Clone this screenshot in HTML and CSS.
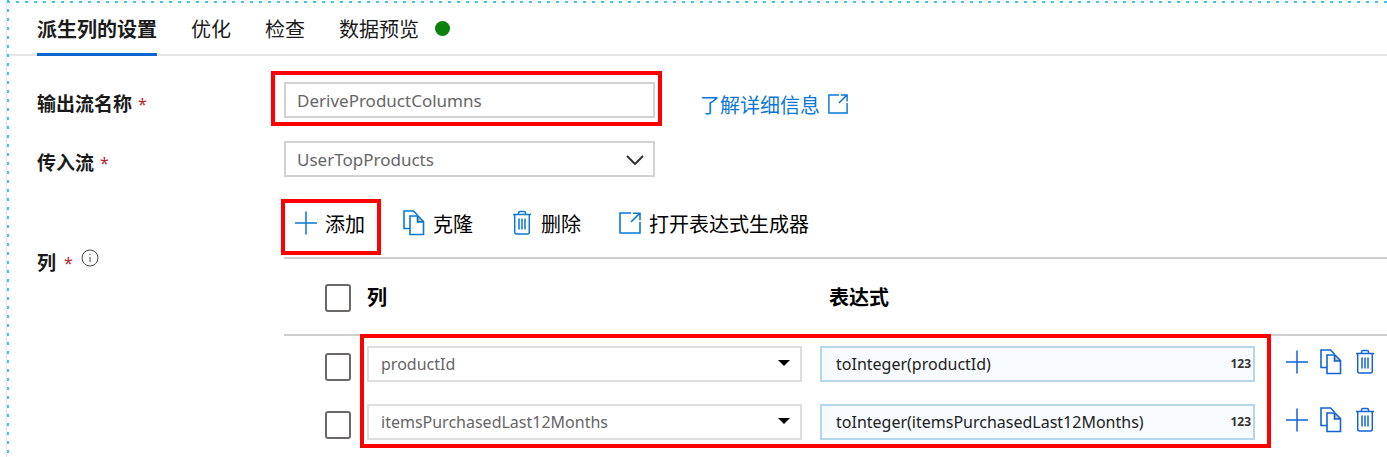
FILE: index.html
```html
<!DOCTYPE html>
<html lang="zh-CN">
<head>
<meta charset="utf-8">
<title>派生列的设置</title>
<link rel="stylesheet" href="styles.css">
</head>
<body>
<svg class="sprite" aria-hidden="true">
  <symbol id="plus" viewBox="0 0 22 26"><path d="M11 1.5v23M0 13h22" stroke-width="1.5"/></symbol>
  <symbol id="copy" viewBox="0 0 22 26"><path d="M6.500 18.500H1V1h9.500l4 4M7 6h8l5.500 5.500V24.500H7zM14.500 6v6h6" stroke-width="1.600"/><path d="M14.500 6.500v5.500h5.500z" fill="currentColor" fill-opacity=".25" stroke="none"/></symbol>
  <symbol id="trash" viewBox="0 0 22 26"><path d="M2 4.500h18M7.500 4.500V3q0-1.500 1.500-1.500h4q1.500 0 1.500 1.500v1.500M3.700 4.500v17.500q0 2 2 2h10.600q2 0 2-2V4.500M8 8.500v11M11 8.500v11M14 8.500v11" stroke-width="1.500"/></symbol>
  <symbol id="open" viewBox="0 0 22 22"><path d="M12 1H1v20h20V10M12 10l8.500-8.500M14 1.200h7v7" stroke-width="1.600"/></symbol>
</svg>
<main class="panel">
  <nav class="tabs" role="tablist">
    <button class="tab tab-active" role="tab" aria-selected="true">派生列的设置</button>
    <button class="tab" role="tab">优化</button>
    <button class="tab" role="tab">检查</button>
    <button class="tab" role="tab">数据预览<span class="status"></span></button>
  </nav>
  <form class="form">
    <label class="label" for="stream">输出流名称 <span class="required">*</span></label>
    <div class="line">
      <div class="field field-marked"><input class="control" id="stream" type="text" value="DeriveProductColumns"></div>
      <a class="link" href="#">了解详细信息<svg class="icon-link"><use href="#open"/></svg></a>
    </div>
    <label class="label" for="incoming">传入流 <span class="required">*</span></label>
    <div class="line">
      <div class="field">
        <select class="control" id="incoming"><option>UserTopProducts</option></select>
        <svg class="chevron" viewBox="0 0 18 10"><path d="M1 1l8 8 8-8"/></svg>
      </div>
    </div>
    <div class="label label-columns"><span>列</span><span class="required">*</span>
      <svg class="info" viewBox="0 0 18 18"><circle cx="9" cy="9" r="8"/><path d="M9 8v5M9 5v1"/></svg>
    </div>
    <section class="columns">
      <div class="toolbar">
        <button class="tool tool-marked" type="button"><svg class="icon"><use href="#plus"/></svg>添加</button>
        <button class="tool" type="button"><svg class="icon"><use href="#copy"/></svg>克隆</button>
        <button class="tool" type="button"><svg class="icon"><use href="#trash"/></svg>删除</button>
        <button class="tool" type="button"><svg class="icon"><use href="#open"/></svg>打开表达式生成器</button>
      </div>
      <div class="table-wrap">
        <table class="table">
          <thead>
            <tr><th class="col-check"><input class="check" type="checkbox" aria-label="全选"></th><th>列</th><th class="head-expression">表达式</th><th class="col-actions"></th></tr>
          </thead>
          <tbody>
            <tr>
              <td class="col-check"><input class="check" type="checkbox" aria-label="productId"></td>
              <td><div class="cell"><select class="control control-column" aria-label="列"><option>productId</option></select><svg class="caret" viewBox="0 0 12 6"><path d="M0 0h12L6 6z"/></svg></div></td>
              <td><div class="cell"><input class="control control-expression" type="text" aria-label="表达式" value="toInteger(productId)"><span class="type">123</span></div></td>
              <td><div class="actions">
                <button class="action" type="button" aria-label="添加"><svg class="icon"><use href="#plus"/></svg></button>
                <button class="action" type="button" aria-label="克隆"><svg class="icon"><use href="#copy"/></svg></button>
                <button class="action" type="button" aria-label="删除"><svg class="icon"><use href="#trash"/></svg></button>
              </div></td>
            </tr>
            <tr>
              <td class="col-check"><input class="check" type="checkbox" aria-label="itemsPurchasedLast12Months"></td>
              <td><div class="cell"><select class="control control-column" aria-label="列"><option>itemsPurchasedLast12Months</option></select><svg class="caret" viewBox="0 0 12 6"><path d="M0 0h12L6 6z"/></svg></div></td>
              <td><div class="cell"><input class="control control-expression" type="text" aria-label="表达式" value="toInteger(itemsPurchasedLast12Months)"><span class="type">123</span></div></td>
              <td><div class="actions">
                <button class="action" type="button" aria-label="添加"><svg class="icon"><use href="#plus"/></svg></button>
                <button class="action" type="button" aria-label="克隆"><svg class="icon"><use href="#copy"/></svg></button>
                <button class="action" type="button" aria-label="删除"><svg class="icon"><use href="#trash"/></svg></button>
              </div></td>
            </tr>
          </tbody>
        </table>
        <div class="table-mark"></div>
      </div>
    </section>
  </form>
</main>
</body>
</html>
```
FILE: styles.css
```css
* { box-sizing: border-box; }
body {
  margin: 0;
  background: #fff;
  color: #1b1b1b;
  font-family: "Noto Sans", "Noto Sans CJK SC", sans-serif;
  font-size: 20px;
}
button, input, select { font: inherit; color: inherit; margin: 0; }
button { background: none; border: 0; padding: 0; }
.sprite { display: none; }

.panel {
  margin-left: 6px;
  padding: 3px 0 4px 2px;
  border-left: 1px solid #e4e4e4;
  background:
    repeating-linear-gradient(90deg, #3fc4ea 0 3px, transparent 3px 9px) 0 1px / 100% 2px no-repeat,
    repeating-linear-gradient(180deg, #3fc4ea 0 3px, transparent 3px 9px) 0 0 / 2px 100% no-repeat;
}

.tabs {
  display: flex;
  gap: 34px;
  height: 53px;
  padding-left: 28px;
  border-bottom: 2px solid #e5e5e5;
}
.tab {
  display: flex;
  align-items: center;
  height: 53px;
  border-bottom: 3px solid transparent;
}
.tab-active { font-weight: 700; border-bottom-color: #0a66d0; }
.status {
  width: 15px;
  height: 15px;
  margin-left: 16px;
  border-radius: 50%;
  background: #0b800b;
}

.form {
  display: grid;
  grid-template-columns: 247px minmax(0, 1fr);
  row-gap: 23px;
  padding: 26px 0 0 28px;
}
.label {
  display: flex;
  gap: 6px;
  height: 36px;
  padding-top: 8px;
  font-size: 19px;
  font-weight: 700;
  line-height: 28px;
}
.label-columns { height: auto; gap: 8px; padding-top: 49px; }
.required { color: #b8242f; font-size: 16px; font-weight: 400; }
.info { width: 18px; height: 18px; fill: none; stroke: #444; }

.line { display: flex; align-items: center; height: 36px; }
.field { position: relative; width: 371px; }
.field-marked::after, .tool-marked::after, .table-mark {
  content: "";
  position: absolute;
  border: 4px solid #f00;
  pointer-events: none;
}
.field-marked::after { inset: -11px -7px -8px -13px; }
.control {
  display: block;
  width: 100%;
  height: 36px;
  padding: 0 11px;
  border: 2px solid #d2d2d2;
  border-radius: 0;
  background: #fff;
  color: #666;
  font-size: 17px;
  appearance: none;
}
.chevron {
  position: absolute;
  top: 14px;
  right: 11px;
  width: 18px;
  height: 10px;
  fill: none;
  stroke: #333;
  stroke-width: 2;
}
.link {
  display: flex;
  align-items: center;
  gap: 8px;
  margin-left: 45px;
  padding-top: 8px;
  color: #0a78d4;
  text-decoration: none;
}
.icon-link { width: 20px; height: 20px; fill: none; stroke: #0a78d4; }

.toolbar { display: flex; gap: 38px; height: 57px; padding-left: 11px; }
.tool {
  position: relative;
  display: flex;
  align-items: center;
  gap: 8px;
  height: 46px;
  color: #000;
}
.tool-marked::after { inset: -1px -16px -9px -14px; }
.icon { display: block; width: 22px; height: 26px; fill: none; stroke: #0a78d4; }

.table-wrap { position: relative; }
.table { width: 100%; table-layout: fixed; border-collapse: collapse; }
.table th, .table td { padding: 0; vertical-align: top; text-align: left; }
.table th {
  height: 77px;
  padding-top: 25px;
  border-top: 2px solid #cfcfcf;
  border-bottom: 2px solid #cfcfcf;
  color: #000;
  line-height: 28px;
}
.table td { height: 59px; padding-top: 10px; }
.table .col-check { width: 83px; padding-left: 41px; }
.table td.col-check { padding-top: 17px; }
.table .col-actions { width: 114px; }
.table .head-expression { padding-left: 9px; }
.check {
  display: block;
  width: 26px;
  height: 28px;
  border: 2px solid #6b6967;
  border-radius: 3px;
  appearance: none;
}
.cell { position: relative; margin-right: 18px; }
.control-column { padding: 0 12px; border-color: #dedede; font-size: 16px; }
.control-expression {
  padding: 0 44px 0 14px;
  border-color: #b4d5ea;
  background: #f7fbff;
  color: #222;
  font-size: 16px;
}
.caret { position: absolute; top: 14px; right: 12px; width: 12px; height: 6px; fill: #000; }
.type {
  position: absolute;
  top: 10px;
  right: 4px;
  color: #333;
  font-size: 12px;
  font-weight: 700;
  line-height: 16px;
}
.actions { display: flex; gap: 12px; padding-left: 13px; padding-top: 3px; }
.actions .icon { stroke: #1264d8; }
.table-mark { inset: 77px 116px 5px 76px; }
```
